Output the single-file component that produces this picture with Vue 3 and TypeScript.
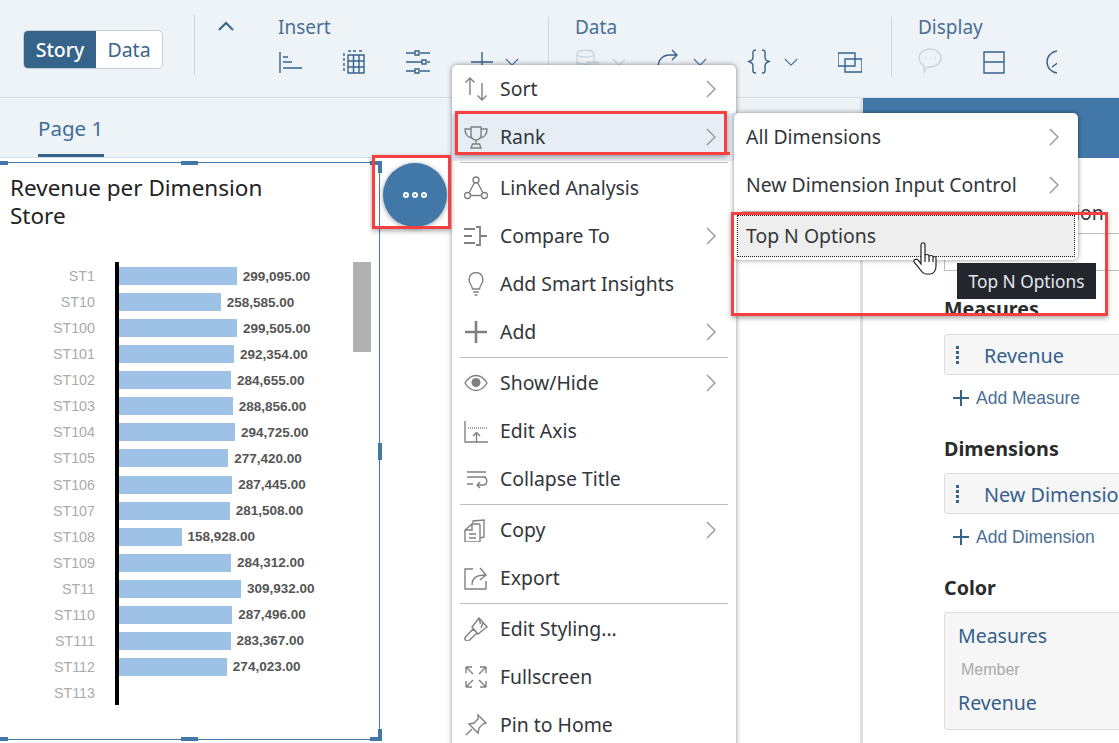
<template>
  <div class="app">
    <!-- Ribbon -->
    <header class="toolbar">
      <div class="segment">
        <span class="seg-btn seg-active">Story</span>
        <span class="seg-btn">Data</span>
      </div>
      <div class="tb-sep first-sep"></div>
      <svg class="collapse" viewBox="0 0 16 10"><path d="M1 9l7-7 7 7" /></svg>

      <section class="group insert-group">
        <div class="group-label">Insert</div>
        <div class="tools">
          <svg v-for="t in insertTools" :key="t.id" class="tool" viewBox="0 0 24 28" :stroke-width="t.sw"><path :d="t.d" /></svg>
          <svg class="caret" viewBox="0 0 16 10"><path d="M1 1l7 7 7-7" /></svg>
        </div>
      </section>
      <div class="tb-sep"></div>

      <section class="group data-group">
        <div class="group-label">Data</div>
        <div class="tools">
          <svg class="tool disabled" viewBox="0 0 24 28"><path :d="toolPaths.db" /></svg>
          <svg class="caret disabled near" viewBox="0 0 16 10"><path d="M1 1l7 7 7-7" /></svg>
          <svg class="tool pull" viewBox="0 0 24 28"><path :d="toolPaths.refresh" /></svg>
          <svg class="caret near" viewBox="0 0 16 10"><path d="M1 1l7 7 7-7" /></svg>
          <svg class="tool" viewBox="0 0 24 28"><path :d="toolPaths.braces" /></svg>
          <svg class="caret near" viewBox="0 0 16 10"><path d="M1 1l7 7 7-7" /></svg>
          <svg class="tool" viewBox="0 0 24 28"><path :d="toolPaths.layers" /></svg>
        </div>
      </section>
      <div class="tb-sep"></div>

      <section class="group display-group">
        <div class="group-label">Display</div>
        <div class="tools">
          <svg class="tool disabled" viewBox="0 0 24 28"><path :d="toolPaths.comment" /></svg>
          <svg class="tool" viewBox="0 0 24 28"><path :d="toolPaths.split" /></svg>
          <svg class="tool" viewBox="0 0 24 28"><path :d="toolPaths.gauge" /></svg>
        </div>
      </section>
    </header>

    <div class="workspace">
      <main class="canvas">
        <div class="tabs">
          <span class="tab">Page 1</span>
        </div>

        <div class="widget">
          <span class="handle h-tl"></span><span class="handle h-tc"></span><span class="handle h-tr"></span>
          <span class="handle h-mr"></span>
          <span class="handle h-bl"></span><span class="handle h-bc"></span><span class="handle h-br"></span>
          <h1 class="chart-title">Revenue per Dimension<br />Store</h1>
          <div class="chart">
            <div v-for="row in rows" :key="row.name" class="chart-row">
              <span class="row-name">{{ row.name }}</span>
              <div class="row-plot">
                <template v-if="row.value">
                  <span class="bar" :style="{ width: barWidth(row.value) + 'px' }"></span>
                  <span class="bar-value">{{ formatValue(row.value) }}</span>
                </template>
              </div>
            </div>
            <span class="chart-scroll"></span>
          </div>
        </div>
      </main>

      <aside class="panel">
        <div class="panel-head"></div>
        <div class="panel-body">
          <div class="orientation">Chart Orientation</div>
          <div class="select-box"></div>
          <h3 class="section-title measures-title">Measures</h3>
          <div class="field"><span class="grip"><i></i><i></i><i></i><i></i></span>Revenue</div>
          <div class="add-link"><svg viewBox="0 0 16 16"><path d="M8 0v16M0 8h16" /></svg>Add Measure</div>
          <h3 class="section-title">Dimensions</h3>
          <div class="field"><span class="grip"><i></i><i></i><i></i><i></i></span>New Dimension</div>
          <div class="add-link"><svg viewBox="0 0 16 16"><path d="M8 0v16M0 8h16" /></svg>Add Dimension</div>
          <h3 class="section-title">Color</h3>
          <div class="color-box">
            <div>Measures</div>
            <div class="member">Member</div>
            <div>Revenue</div>
          </div>
        </div>
      </aside>
    </div>

    <!-- Floating button -->
    <button class="fab"><i></i><i></i><i></i></button>

    <!-- Context menu -->
    <div class="menu">
      <template v-for="entry in menuItems" :key="entry.label">
        <div class="menu-item" :class="{ 'menu-active': entry.label === 'Rank' }">
          <svg class="menu-icon" viewBox="0 0 24 24" :stroke-width="entry.sw || 1.4" v-html="entry.icon"></svg>
          <span class="menu-text">{{ entry.label }}</span>
          <svg v-if="entry.more" class="more" viewBox="0 0 10 18"><path d="M1 1l8 8-8 8" /></svg>
        </div>
        <div v-if="entry.sep" class="menu-sep"></div>
      </template>
    </div>

    <!-- Sub menu -->
    <div class="submenu">
      <div class="menu-item sub-item">
        <span class="menu-text">All Dimensions</span>
        <svg class="more" viewBox="0 0 10 18"><path d="M1 1l8 8-8 8" /></svg>
      </div>
      <div class="menu-item sub-item">
        <span class="menu-text">New Dimension Input Control</span>
        <svg class="more" viewBox="0 0 10 18"><path d="M1 1l8 8-8 8" /></svg>
      </div>
      <div class="menu-sep sub-sep"></div>
      <div class="top-n"><span class="top-n-text">Top N Options</span></div>
    </div>

    <div class="tooltip">Top N Options</div>

    <div class="red-box red-fab"></div>
    <div class="red-box red-rank"></div>
    <div class="red-box red-top"></div>

    <svg class="cursor" viewBox="0 0 28 36">
      <path d="M10 3c0-3 4-3 4 0v11c0-2 4-2 4 0v1c0-2 4-2 4 0v1c0-2 3-2 3 0v8c0 4-2 8-6 8h-4c-3 0-5-3-7-6l-5-6c-1-2 2-4 4-2l3 4z" />
      <path d="M14 14v6M18 15v5M22 16v4" />
    </svg>
  </div>
</template>

<script setup lang="ts">
interface MenuEntry {
  label: string;
  icon: string;
  more?: boolean;
  sep?: boolean;
  sw?: number;
}

const p = (d: string) => `<path d="${d}" />`;

const toolPaths = {
  db: 'M2 6c0-5 17-5 17 0v14c0 4-17 4-17 0zM2 6c0 4 17 4 17 0M2 13c0 3 9 4 12 3M12 14h12v10H12zM15 14v4h6v-4',
  refresh: 'M3 25C0 14 5 7 14 7h7M16 2l5 5-5 5',
  braces: 'M9 2C5 2 6 5 6 8s0 4-4 5.500c4 1.500 4 3 4 6s-1 5.500 3 5.500M15 2c4 0 3 3 3 6s0 4 4 5.500c-4 1.500-4 3-4 6s1 5.500-3 5.500',
  layers: 'M0 5h17v13H0zM7 11h17v13H7z',
  comment: 'M12 1c6 0 11 4 11 9s-5 9-11 9l-3 0-3 5v-6c-3-2-5-5-5-8 0-5 5-9 11-9zM7 10h1M12 10h1M17 10h1',
  split: 'M2 4h20v21H2zM2 14h20',
  gauge: 'M12 3a11 11 0 1 0 0 22M6 19l8-6M12 3h6'
};

const insertTools = [
  { id: 'bars', sw: 2.4, d: 'M2 4v21M5 9h5M5 14h9M5 20h19' },
  { id: 'table', sw: 1.3, d: 'M6 7h16v18H6zM6 13h16M6 19h16M11.500 7v18M17 7v18M2 5v3M2 10v3M2 15v3M2 20v3M6 3h3M11 3h3M17 3h3' },
  { id: 'filters', sw: 1.2, d: 'M0 5h9M14 5h10M9 3h4v4H9zM0 14h16M21 14h3M16 12h4v4h-4zM0 23h9M14 23h10M9 21h4v4H9z' },
  { id: 'plus', sw: 3.2, d: 'M12 4v21M1 14h22' }
];

const menuItems: MenuEntry[] = [
  { label: 'Sort', more: true, icon: p('M6 18V1M1.500 5.500 6 1l4.500 4.500M18 6v17M13.500 18.500 18 23l4.500-4.500') },
  { label: 'Rank', more: true, sep: true, icon: p('M7 2h10v8a5 5 0 0 1-10 0zM7 4H1c0 5 2 8 6.500 9M17 4h6c0 5-2 8-6.500 9M12 15v4M8.500 19h7L17 23H7z') },
  { label: 'Linked Analysis', icon: p('M15 4a3 3 0 1 1-6 0 3 3 0 0 1 6 0zM6.500 19.500a3 3 0 1 1-6 0 3 3 0 0 1 6 0zM23.500 19.500a3 3 0 1 1-6 0 3 3 0 0 1 6 0zM10.500 6.500 5 17M13.500 6.500 19 17M6.500 19.500h11') },
  { label: 'Compare To', more: true, sw: 1.8, icon: p('M0 5h11M0 12h8M0 19h11M16 2v20M12 3h4M16 12h7M12 21h4') },
  { label: 'Add Smart Insights', icon: p('M8.500 17c0-3-3.500-5-3.500-9.500a7 7 0 0 1 14 0c0 4.500-3.500 6.500-3.500 9.500zM9 20h6M10.500 23h3') },
  { label: 'Add', more: true, sep: true, sw: 2.6, icon: p('M12 1v22M1 12h22') },
  { label: 'Show/Hide', more: true, icon: p('M1 12c3-5 7-7.500 11-7.500S20 7 23 12c-3 5-7 7.500-11 7.500S4 17 1 12z') + '<circle cx="12" cy="11.500" r="4.500" fill="#808080" stroke="none" />' },
  { label: 'Edit Axis', icon: p('M1 2v21h23M12.500 23v-9M9 17l3.500-3.500L16 17') + '<path d="M4 9h20" stroke-dasharray="1 1" />' },
  { label: 'Collapse Title', sep: true, icon: p('M3 5h19M3 10h19M3 17h6M19 10c5 0 5 8 0 8h-6M16 15l-3 3 3 3') },
  { label: 'Copy', more: true, icon: p('M8 6h7a1 1 0 0 1 1 1v16a1 1 0 0 1-1 1H2a1 1 0 0 1-1-1V12zM8 6v6H1M9 5V3l11-1v17l-4 1M5 16h7M5 20h7') },
  { label: 'Export', sep: true, icon: p('M9 3H1v20h21v-8M8 19c0-6 4-10 13-10M16 2l6 7-6 5') },
  { label: 'Edit Styling...', icon: p('M1.500 20 9 12l4 4-7.500 7a2.500 2.500 0 0 1-4-3zM8 10l7-9 8 9-9 7zM15 1l1.500 6M19 5.500 17 11') },
  { label: 'Fullscreen', icon: p('M2 2l7 7M2 2v6M2 2h6M22 2l-7 7M22 2v6M22 2h-6M2 22l7-7M2 22v-6M2 22h6M22 22l-7-7M22 22v-6M22 22h-6') },
  { label: 'Pin to Home', icon: p('M14 2l8 8-3 1-4 4-1 5-9-9 5-1 4-4zM8 16l-6 6') }
];

const rows = [
  { name: 'ST1', value: 299095 },
  { name: 'ST10', value: 258585 },
  { name: 'ST100', value: 299505 },
  { name: 'ST101', value: 292354 },
  { name: 'ST102', value: 284655 },
  { name: 'ST103', value: 288856 },
  { name: 'ST104', value: 294725 },
  { name: 'ST105', value: 277420 },
  { name: 'ST106', value: 287445 },
  { name: 'ST107', value: 281508 },
  { name: 'ST108', value: 158928 },
  { name: 'ST109', value: 284312 },
  { name: 'ST11', value: 309932 },
  { name: 'ST110', value: 287496 },
  { name: 'ST111', value: 283367 },
  { name: 'ST112', value: 274023 },
  { name: 'ST113', value: 0 }
];

const barWidth = (value: number): number => (value / 309932) * 122;

const formatValue = (value: number): string =>
  value.toLocaleString('en-US', { minimumFractionDigits: 2, maximumFractionDigits: 2 });
</script>

<style scoped>
.app {
  position: relative;
  width: 1119px;
  height: 743px;
  overflow: hidden;
  background: #fff;
  font-family: "Noto Sans", "Liberation Sans", sans-serif;
  color: #32363a;
}

/* Ribbon */
.toolbar {
  display: flex;
  align-items: flex-start;
  height: 97px;
  box-sizing: content-box;
  background: #eef3f8;
  border-bottom: 1px solid #d5dfe8;
  color: #4a6f94;
}

.segment {
  display: flex;
  margin: 30px 0 0 23px;
  width: 140px;
  height: 39px;
  background: #fff;
  border: 1px solid #c6ced6;
  border-radius: 5px;
  box-sizing: border-box;
  overflow: hidden;
  font-size: 19.500px;
}

.seg-btn {
  display: flex;
  align-items: center;
  justify-content: center;
  flex: 1;
  color: #3a6590;
}

.seg-active {
  flex: 0 0 72px;
  background: #366389;
  color: #fff;
  font-weight: 500;
}

.tb-sep {
  flex: none;
  width: 1px;
  height: 60px;
  margin-top: 17px;
  background: #cdd6de;
}

.first-sep {
  margin-left: 31px;
  margin-top: 15px;
}

.collapse {
  flex: none;
  width: 16px;
  height: 10px;
  margin: 21px 0 0 23px;
  fill: none;
  stroke: #36628a;
  stroke-width: 2;
}

.group-label {
  height: 48px;
  padding-top: 14px;
  box-sizing: border-box;
  font-size: 19px;
  line-height: 26px;
}

.insert-group {
  width: 270px;
  margin-left: 44px;
  flex: none;
}

.data-group {
  width: 316px;
  margin-left: 26px;
  flex: none;
}

.display-group {
  width: 139px;
  margin-left: 26px;
  flex: none;
  overflow: hidden;
}

.tools {
  display: flex;
  align-items: center;
  gap: 40px;
}

.tool {
  flex: none;
  width: 24px;
  height: 28px;
  fill: none;
  stroke: #36628a;
  stroke-width: 1.4;
}

.caret {
  flex: none;
  width: 14px;
  height: 9px;
  margin-left: -29px;
  fill: none;
  stroke: #4a74a0;
  stroke-width: 1.3;
}

.near {
  margin-left: -27px;
}

.pull {
  margin-left: -10px;
}

.disabled {
  stroke: #c9d6e2;
}

/* Canvas */
.workspace {
  display: flex;
  height: 645px;
}

.canvas {
  flex: none;
  width: 860px;
}

.tabs {
  height: 60px;
  box-sizing: border-box;
  background: #eef3f8;
  border-bottom: 1px solid #cfdfee;
  padding-left: 38px;
}

.tab {
  display: block;
  width: 66px;
  height: 59px;
  box-sizing: border-box;
  padding-top: 16px;
  border-bottom: 3px solid #36628a;
  font-size: 20.500px;
  line-height: 28px;
  color: #3e6e98;
  white-space: nowrap;
}

.widget {
  position: relative;
  width: 380px;
  height: 578px;
  margin-top: 4px;
  box-sizing: border-box;
  border-top: 1px solid #4178a8;
  border-right: 1px solid #4178a8;
  border-bottom: 1px solid #4178a8;
}

.handle {
  position: absolute;
  background: #4178a8;
}

.h-tl { left: 0; top: -2px; width: 8px; height: 4px; }
.h-tc { left: 181px; top: -2px; width: 17px; height: 4px; }
.h-tr { right: -3px; top: -2px; width: 12px; height: 4px; }
.h-mr { right: -3px; top: 280px; width: 4px; height: 17px; }
.h-bl { left: 0; bottom: -2px; width: 8px; height: 4px; }
.h-bc { left: 181px; bottom: -2px; width: 17px; height: 4px; }
.h-br { right: -3px; bottom: -2px; width: 12px; height: 4px; }

.h-tr::after,
.h-br::after {
  content: "";
  position: absolute;
  right: 0;
  width: 4px;
  height: 10px;
  background: #4178a8;
}

.h-tr::after { top: 2px; }
.h-br::after { bottom: 2px; }

.chart-title {
  margin: 0;
  padding: 11px 0 0 10px;
  font-size: 22.500px;
  font-weight: 400;
  line-height: 28px;
  color: #222;
}

.chart {
  position: relative;
  margin-top: 32px;
  padding-top: 1px;
  height: 443px;
  box-sizing: border-box;
  font-family: "Liberation Sans", Arial, sans-serif;
}

.chart-row {
  display: flex;
  align-items: center;
  height: 26.070px;
}

.row-name {
  flex: none;
  width: 95px;
  text-align: right;
  font-size: 14.300px;
  color: #aaa;
}

.row-plot {
  display: flex;
  align-items: center;
  margin-left: 24px;
  gap: 6px;
}

.chart::before {
  content: "";
  position: absolute;
  left: 115px;
  top: 0;
  bottom: 0;
  width: 4px;
  background: #000;
}

.bar {
  flex: none;
  height: 18px;
  background: #9dc2e6;
}

.bar-value {
  font-size: 13.500px;
  font-weight: 700;
  color: #555;
  white-space: nowrap;
}

.chart-scroll {
  position: absolute;
  left: 353px;
  top: 0;
  width: 18px;
  height: 90px;
  background: #b0b0b0;
}

/* Builder panel */
.panel {
  flex: 1;
  min-width: 0;
  overflow: hidden;
  border-left: 3px solid #e0e0e0;
}

.panel-head {
  height: 60px;
  background: #4178a8;
}

.panel-body {
  padding: 44px 0 0 81px;
  width: 340px;
  box-sizing: border-box;
}

.orientation {
  height: 22px;
  line-height: 22px;
  font-size: 19.400px;
  font-weight: 400;
  white-space: nowrap;
}

.select-box {
  width: 300px;
  height: 38px;
  margin-top: 9px;
  box-sizing: border-box;
  border: 1px solid #bfbfbf;
}

.section-title {
  margin: 0;
  height: 24px;
  line-height: 24px;
  font-size: 19.700px;
  font-weight: 700;
  color: #2b2b2b;
}

.measures-title {
  margin-top: 26px;
  margin-bottom: 13px;
}

.section-title:not(.measures-title) {
  margin-top: 28px;
  margin-bottom: 12px;
}

.field {
  display: flex;
  align-items: center;
  width: 300px;
  height: 41px;
  box-sizing: border-box;
  padding: 2px 0 0 11px;
  background: #f6f6f6;
  border: 1px solid #dcdcdc;
  border-radius: 3px;
  font-size: 19.800px;
  color: #35608c;
  white-space: nowrap;
}

.grip {
  display: flex;
  flex-direction: column;
  gap: 2px;
  margin: -2px 25px 0 0;
}

.grip i {
  display: block;
  width: 3px;
  height: 3px;
  background: #36628a;
}

.add-link {
  display: flex;
  align-items: center;
  gap: 7px;
  height: 22px;
  margin: 12px 0 0 9px;
  font-family: "Liberation Sans", Arial, sans-serif;
  font-size: 17.500px;
  color: #4a6f94;
}

.add-link svg {
  width: 16px;
  height: 16px;
  fill: none;
  stroke: #36628a;
  stroke-width: 2;
}

.color-box {
  display: flex;
  flex-direction: column;
  gap: 7.500px;
  width: 300px;
  height: 118px;
  box-sizing: border-box;
  padding: 10px 13px;
  background: #f6f6f6;
  border: 1px solid #dcdcdc;
  border-radius: 3px;
  font-size: 19.500px;
  line-height: 26px;
  color: #35608c;
}

.member {
  padding-left: 3px;
  font-family: "Liberation Sans", Arial, sans-serif;
  font-size: 16px;
  color: #aaa;
}

/* Floating button */
.fab {
  position: absolute;
  left: 383px;
  top: 163px;
  width: 64px;
  height: 64px;
  display: flex;
  align-items: center;
  justify-content: center;
  gap: 3px;
  padding: 0;
  border: none;
  border-radius: 50%;
  background: #4178a8;
  box-shadow: 0 1px 5px rgba(0, 0, 0, 0.4);
}

.fab i {
  display: block;
  width: 6px;
  height: 6px;
  box-sizing: border-box;
  border: 2px solid #fff;
  border-radius: 50%;
}

/* Menus */
.menu {
  position: absolute;
  left: 452px;
  top: 65px;
  width: 284px;
  height: 690px;
  box-sizing: border-box;
  background: #fff;
  border-radius: 5px;
  box-shadow: 0 0 5px rgba(0, 0, 0, 0.45);
}

.menu-item {
  display: flex;
  align-items: center;
  height: 48px;
  box-sizing: border-box;
  padding: 0 20px 0 12px;
  font-size: 19.400px;
  color: #32363a;
}

.menu-active {
  background: #e6edf5;
}

.menu-icon {
  flex: none;
  width: 24px;
  height: 24px;
  margin-right: 12px;
  fill: none;
  stroke: #808080;
}

.menu-text {
  flex: 1;
  margin-top: -2px;
  white-space: nowrap;
}

.more {
  flex: none;
  width: 10px;
  height: 18px;
  fill: none;
  stroke: #949494;
  stroke-width: 1.300;
}

.menu-sep {
  height: 1px;
  margin: 1px 8px;
  background: #bdbdbd;
}

.submenu {
  position: absolute;
  left: 734px;
  top: 113px;
  width: 344px;
  height: 147px;
  box-sizing: border-box;
  padding: 0 3px;
  background: #fff;
  border-radius: 5px;
  box-shadow: 0 0 5px rgba(0, 0, 0, 0.45);
}

.sub-item {
  padding: 0 16px 0 9px;
}

.sub-sep {
  margin: 2px 5px 3px;
}

.top-n {
  display: flex;
  align-items: center;
  height: 42px;
  box-sizing: border-box;
  padding-left: 8px;
  background: #eeeeee;
  border: 1px dotted #222;
  font-size: 19.400px;
  color: #32363a;
}

.top-n-text {
  margin-top: -2px;
}

.tooltip {
  position: absolute;
  left: 957px;
  top: 263px;
  width: 139px;
  height: 36px;
  display: flex;
  align-items: center;
  justify-content: center;
  background: #23262d;
  font-size: 17.300px;
  color: #e3e8ee;
  white-space: nowrap;
}

.red-box {
  position: absolute;
  box-sizing: border-box;
  border: 3px solid #f44040;
  box-shadow: 0 2px 5px rgba(0, 0, 0, 0.35);
}

.red-fab { left: 372px; top: 155px; width: 79px; height: 74px; }
.red-rank { left: 455px; top: 111px; width: 272px; height: 44px; }
.red-top { left: 731px; top: 212px; width: 377px; height: 104px; }

.red-rank::after {
  content: "";
  position: absolute;
  right: -6px;
  bottom: -3px;
  width: 6px;
  height: 3px;
  background: #f44040;
}

.cursor {
  position: absolute;
  left: 911px;
  top: 242px;
  width: 28px;
  height: 36px;
  fill: #fff;
  stroke: #222;
  stroke-width: 1.200;
}
</style>

<style>
html, body {
  margin: 0;
  overflow: hidden;
}
</style>
